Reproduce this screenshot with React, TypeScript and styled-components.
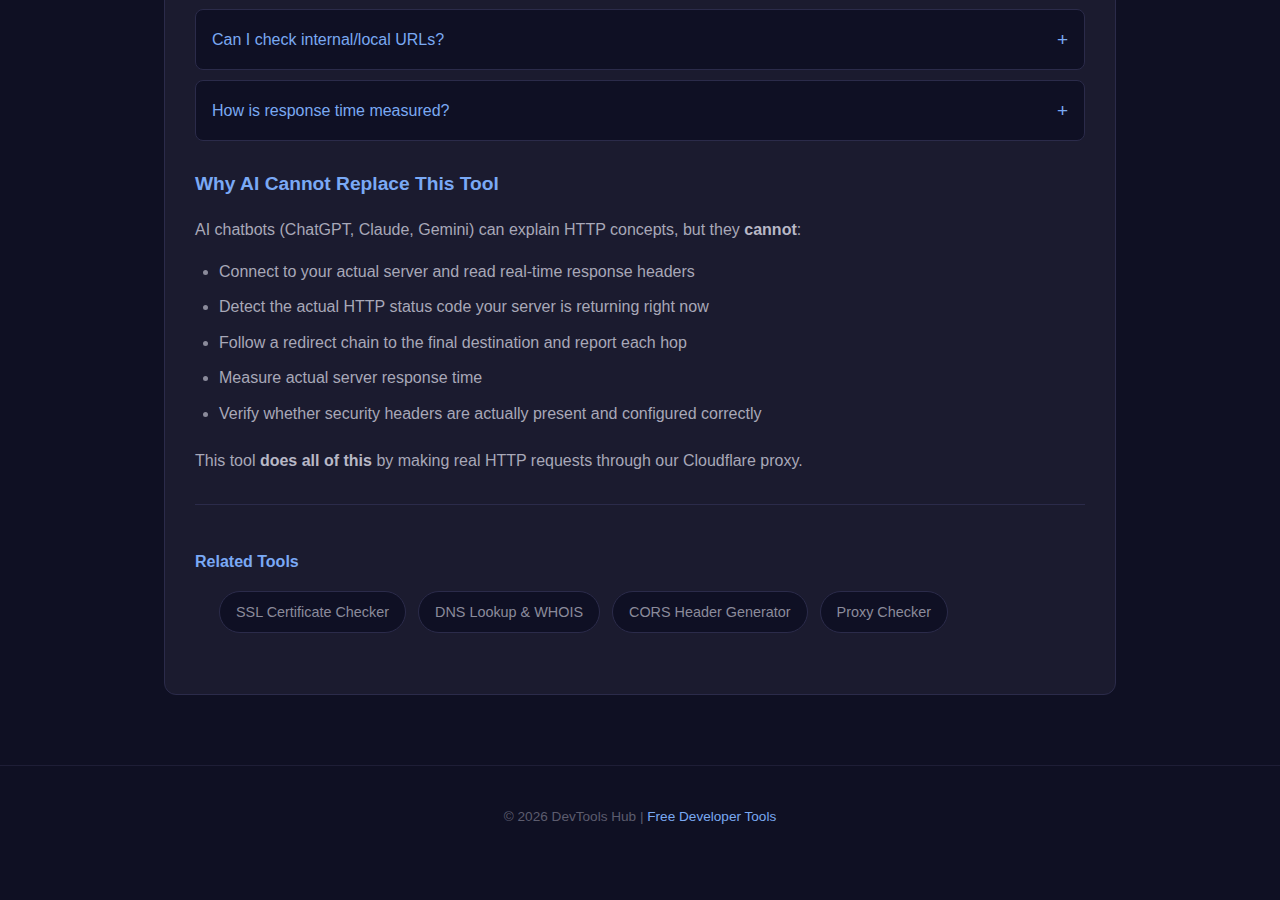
import React from 'react';
import styled, { createGlobalStyle } from 'styled-components';

const GlobalStyle = createGlobalStyle`
    html, body {
        margin: 0;
        padding: 0;
        background: #0f1023;
        font-family: "Liberation Sans", Arial, sans-serif;
        color: #a8a8b8;
    }
`;

const Page = styled.div`
    min-height: 900px;
    overflow: hidden;
`;

const Main = styled.main`
    width: 952px;
    margin: 0 auto;
    padding-bottom: 70px;
`;

const Card = styled.section`
    margin-top: -40px;
    background: #1b1b2f;
    border: 1px solid #2b2b4a;
    border-radius: 12px;
    padding: 48px 30px 30px;
`;

const FaqList = styled.div`
    display: flex;
    flex-direction: column;
    gap: 10px;
`;

const FaqItem = styled.div`
    background: #0f1024;
    border: 1px solid #2b2b4a;
    border-radius: 8px;
`;

const FaqQuestion = styled.button`
    width: 100%;
    height: 59px;
    display: flex;
    align-items: center;
    justify-content: space-between;
    padding: 0 16px;
    background: none;
    border: 0;
    font-family: inherit;
    font-size: 16px;
    color: #7aa9f2;
    text-align: left;
    cursor: pointer;

    span:last-child {
        font-size: 19px;
        line-height: 1;
    }
`;

const Heading = styled.h3`
    margin: 32px 0 22px;
    font-size: 19.2px;
    font-weight: bold;
    color: #7aa9f5;
`;

const Text = styled.p`
    margin: 0 0 16px;
    font-size: 16px;
    line-height: 1.6;
    color: #a8a8b8;

    strong {
        color: #b8b8c6;
    }
`;

const List = styled.ul`
    margin: 0 0 21px;
    padding-left: 24px;

    li {
        font-size: 16px;
        line-height: 1.6;
        margin-bottom: 10px;
    }
    li::marker {
        color: #8a8a9a;
    }
`;

const Divider = styled.hr`
    margin: 31px 0 0;
    border: 0;
    border-top: 1px solid #2b2b4a;
`;

const Related = styled.div`
    padding-top: 48px;
`;

const RelatedTitle = styled.h4`
    margin: 0 0 20px;
    font-size: 16px;
    line-height: 18px;
    color: #7aa9f5;
`;

const Pills = styled.ul`
    display: flex;
    flex-wrap: wrap;
    gap: 12px;
    list-style: none;
    margin: 0 0 31px;
    padding-left: 24px;
`;

const Pill = styled.a`
    display: block;
    padding: 12px 16px;
    font-size: 14.4px;
    line-height: 16px;
    color: #8b8b9b;
    background: #0f1024;
    border: 1px solid #2b2b4a;
    border-radius: 21px;
    text-decoration: none;
`;

const Footer = styled.footer`
    border-top: 1px solid #1e1e36;
    padding: 43px 0;
    text-align: center;
    font-size: 13.6px;
    line-height: 15px;
    color: #5c5c6e;

    a {
        color: #7aa9f2;
        text-decoration: none;
    }
`;

const faqs = ['Can I check internal/local URLs?', 'How is response time measured?'];

const cannot = [
    'Connect to your actual server and read real-time response headers',
    'Detect the actual HTTP status code your server is returning right now',
    'Follow a redirect chain to the final destination and report each hop',
    'Measure actual server response time',
    'Verify whether security headers are actually present and configured correctly',
];

const tools = ['SSL Certificate Checker', 'DNS Lookup & WHOIS', 'CORS Header Generator', 'Proxy Checker'];

const App = () => {
    return (
        <Page>
            <GlobalStyle />
            <Main>
                <Card>
                    <FaqList>
                        {faqs.map((q) => (
                            <FaqItem key={q}>
                                <FaqQuestion>
                                    <span>{q}</span>
                                    <span>+</span>
                                </FaqQuestion>
                            </FaqItem>
                        ))}
                    </FaqList>

                    <Heading>Why AI Cannot Replace This Tool</Heading>
                    <Text>
                        AI chatbots (ChatGPT, Claude, Gemini) can explain HTTP concepts, but they <strong>cannot</strong>:
                    </Text>
                    <List>
                        {cannot.map((c) => (
                            <li key={c}>{c}</li>
                        ))}
                    </List>
                    <Text>
                        This tool <strong>does all of this</strong> by making real HTTP requests through our Cloudflare proxy.
                    </Text>

                    <Divider />

                    <Related>
                        <RelatedTitle>Related Tools</RelatedTitle>
                        <Pills>
                            {tools.map((t) => (
                                <li key={t}>
                                    <Pill href="#">{t}</Pill>
                                </li>
                            ))}
                        </Pills>
                    </Related>
                </Card>
            </Main>
            <Footer>
                © 2026 DevTools Hub | <a href="#">Free Developer Tools</a>
            </Footer>
        </Page>
    );
};

export default App;
